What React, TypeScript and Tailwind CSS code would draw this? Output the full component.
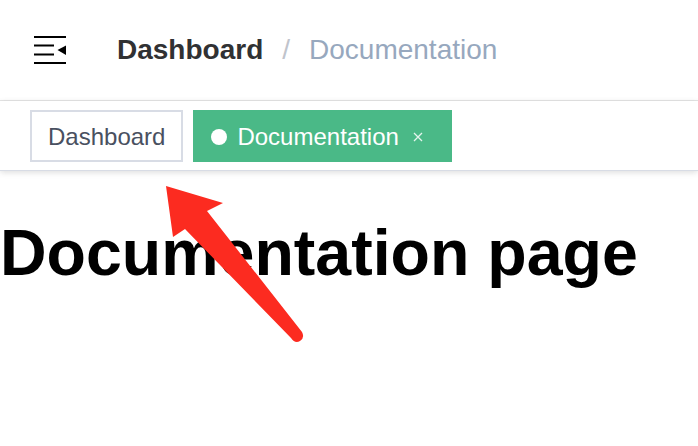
import { Fragment } from "react";

type tagType = { title: string; active?: boolean }[];

const tags: tagType = [
  { title: "Dashboard" },
  { title: "Documentation", active: true },
];

function Hamburger() {
  return (
    <svg width="32" height="28" viewBox="0 0 32 28" fill="#000">
      <rect x="0" y="0" width="32" height="2" />
      <rect x="0" y="8.5" width="20" height="2" />
      <rect x="0" y="17.5" width="20" height="2" />
      <rect x="0" y="26" width="32" height="2" />
      <polygon points="23.5,14 32,9.5 32,19" />
    </svg>
  );
}

export default function App() {
  return (
    <div className="relative w-[698px] h-[446px] overflow-hidden bg-white font-['Liberation_Sans',Arial,sans-serif]">
      <div className="h-[101px] flex items-center border-b border-[#e6e6e6]">
        <div className="ml-[34px] mt-[-1px] flex">
          <Hamburger />
        </div>
        <div className="ml-[51px] flex items-center text-[28px]">
          <span className="font-bold text-[#303133]">Dashboard</span>
          <span className="mx-[19px] text-[#c0c4cc]">/</span>
          <span className="text-[#97a8be]">Documentation</span>
        </div>
      </div>
      <div className="h-[70px] flex items-start pt-[9px] pl-[30px] gap-[10px] border-b border-[#d8dce5] shadow-[0_2px_6px_0_rgba(0,0,0,0.10),0_0_6px_0_rgba(0,0,0,0.04)]">
        {tags.map((tag, index) => (
          <Fragment key={index}>
            {tag.active ? (
              <div className="h-[52px] flex items-center pt-[2px] pl-[16px] pr-[24px] bg-[#4ab987] border-2 border-[#4ab987] text-white text-[24px]">
                <span className="w-4 h-4 rounded-full bg-white" />
                <span className="ml-[10px]">{tag.title}</span>
                <span className="ml-[11px] w-4 flex justify-center">
                  <svg width="10" height="10" viewBox="0 0 10 10">
                    <path
                      d="M1 1L9 9M9 1L1 9"
                      stroke="rgba(255,255,255,0.85)"
                      strokeWidth="1.3"
                    />
                  </svg>
                </span>
              </div>
            ) : (
              <div className="h-[52px] flex items-center pt-[2px] px-[16px] border-2 border-[#d8dce5] text-[#495060] text-[24px]">
                {tag.title}
              </div>
            )}
          </Fragment>
        ))}
      </div>
      <h1 className="mt-[50px] text-[64.5px] leading-none font-bold text-black">
        Documentation page
      </h1>
      <svg
        className="absolute left-0 top-0 pointer-events-none"
        width="698"
        height="446"
        viewBox="0 0 698 446"
      >
        <path
          d="M166 186 L223 203 L207 211 L302 332 Q305 338 300 341 Q295 344 291 338 L185 229 L173 237 Z"
          fill="#fc2b20"
        />
      </svg>
    </div>
  );
}
